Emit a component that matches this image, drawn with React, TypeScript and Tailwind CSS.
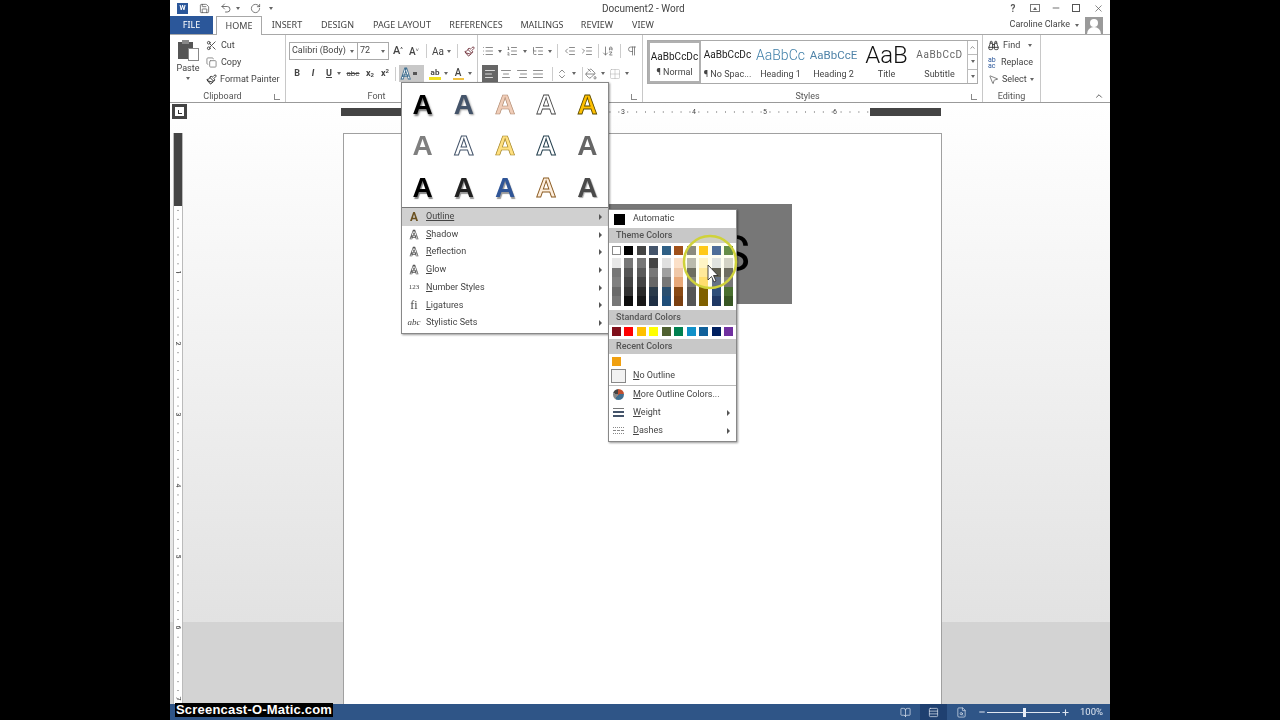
import { Scissors, Copy, Paintbrush, Undo2, RotateCw, Save, ChevronUp, X, Minus, Binoculars, MousePointer2, Plus, List, ListOrdered, ListTree, IndentDecrease, IndentIncrease, ArrowDownAZ, Pilcrow, AlignLeft, AlignCenter, AlignRight, AlignJustify, ChevronsUpDown, PaintBucket, Grid2x2, BookOpen, Rows3, FileSearch } from "lucide-react";

const font = "font-['Roboto',sans-serif]";
const tabFont = "font-['Noto_Sans',sans-serif]";

const tabs = [
  { label: "INSERT", w: "w-[50px]" },
  { label: "DESIGN", w: "w-[51px]" },
  { label: "PAGE LAYOUT", w: "w-[78px]" },
  { label: "REFERENCES", w: "w-[70px]" },
  { label: "MAILINGS", w: "w-[62px]" },
  { label: "REVIEW", w: "w-[48px]" },
  { label: "VIEW", w: "w-[44px]" },
];

const styleCards = [
  { sample: "AaBbCcDc", label: "¶ Normal", cls: "text-[10px] text-[#222]", active: true },
  { sample: "AaBbCcDc", label: "¶ No Spac...", cls: "text-[10px] text-[#222]" },
  { sample: "AaBbCc", label: "Heading 1", cls: "text-[14px] font-light text-[#3f7fa8]" },
  { sample: "AaBbCcE", label: "Heading 2", cls: "text-[11.5px] text-[#4f83a8]" },
  { sample: "AaB", label: "Title", cls: "h-[16px] text-[24px] font-light leading-[16px] text-[#111]" },
  { sample: "AaBbCcD", label: "Subtitle", cls: "text-[10px] tracking-[0.6px] text-[#666]" },
];

const galleryLetters = [
  "text-black [text-shadow:1px_2px_2px_#777]",
  "text-[#44546a] [text-shadow:1px_1px_2px_#999]",
  "text-[#f0cdb8] [-webkit-text-stroke:0.7px_#b08a70]",
  "text-white [-webkit-text-stroke:0.8px_#444]",
  "text-[#ffc000] [-webkit-text-stroke:0.8px_#5a4a00]",
  "text-[#7f7f7f]",
  "text-white [-webkit-text-stroke:1px_#44546a]",
  "text-[#ffe080] [-webkit-text-stroke:0.7px_#a08020]",
  "text-white [-webkit-text-stroke:1px_#25404f]",
  "text-[#666666]",
  "text-black [text-shadow:1px_2px_1px_#888]",
  "text-[#222222] [text-shadow:1px_2px_1px_#999]",
  "text-[#2f5597] [text-shadow:1px_2px_1px_#999]",
  "text-[#fdeedd] [-webkit-text-stroke:0.9px_#8a5a20]",
  "text-[#4a4a4a] [text-shadow:1px_1px_1px_#aaa]",
];

const outlinedA = "text-[12px] font-bold leading-none text-white [-webkit-text-stroke:0.7px_#555]";

const effectRows = [
  { key: "S", rest: "hadow", icon: "A", iconCls: outlinedA },
  { key: "R", rest: "eflection", icon: "A", iconCls: outlinedA },
  { key: "G", rest: "low", icon: "A", iconCls: outlinedA },
  { key: "N", rest: "umber Styles", icon: "123", iconCls: "text-[7px] font-['Liberation_Serif',serif] leading-none text-[#444]" },
  { key: "L", rest: "igatures", icon: "fi", iconCls: "text-[12px] font-['Liberation_Serif',serif] leading-none text-[#444]" },
  { key: "", rest: "Stylistic Sets", icon: "abc", iconCls: "text-[9px] italic font-['Liberation_Serif',serif] leading-none text-[#444]" },
];

const themeTop = ["bg-white border border-[#888]", "bg-black", "bg-[#444444]", "bg-[#44546a]", "bg-[#2e5f85]", "bg-[#a0501a]", "bg-[#777777]", "bg-[#ffc000]", "bg-[#2f5597]", "bg-[#4a7a38]"];

const themeShades = [
  ["bg-[#e8e8e8]", "bg-[#777777]", "bg-[#808080]", "bg-[#6a6a6a]", "bg-[#777777]"],
  ["bg-[#777777]", "bg-[#555555]", "bg-[#444444]", "bg-[#333333]", "bg-[#0d0d0d]"],
  ["bg-[#777777]", "bg-[#5a5a5a]", "bg-[#444444]", "bg-[#2a2a2a]", "bg-[#181818]"],
  ["bg-[#444444]", "bg-[#777777]", "bg-[#666666]", "bg-[#2a3a4a]", "bg-[#1f2f44]"],
  ["bg-[#e0e0e0]", "bg-[#a0a0a0]", "bg-[#777777]", "bg-[#2a4f6f]", "bg-[#1f4e79]"],
  ["bg-[#fbe0c8]", "bg-[#f0c8a8]", "bg-[#e8a878]", "bg-[#8a4a14]", "bg-[#7a3f10]"],
  ["bg-[#b0b0b0]", "bg-[#555555]", "bg-[#777777]", "bg-[#555555]", "bg-[#555555]"],
  ["bg-[#fff2cc]", "bg-[#ffe699]", "bg-[#ffd966]", "bg-[#7f6000]", "bg-[#7f6000]"],
  ["bg-[#dbe0ea]", "bg-[#444444]", "bg-[#4a5a80]", "bg-[#2f4f7a]", "bg-[#1f3864]"],
  ["bg-[#cccccc]", "bg-[#555555]", "bg-[#777777]", "bg-[#4a7030]", "bg-[#375623]"],
];

const standard = ["bg-[#7f0f1a]", "bg-[#ff0000]", "bg-[#ffc000]", "bg-[#ffff00]", "bg-[#4f6030]", "bg-[#008050]", "bg-[#1090c8]", "bg-[#10609a]", "bg-[#002060]", "bg-[#7030a0]"];

function Caret({ className = "" }: { className?: string }) {
  return <span className={`inline-block h-0 w-0 shrink-0 border-x-[2px] border-t-[3px] border-x-transparent border-t-[#666] ${className}`} />;
}

function SubArrow() {
  return <span className="h-0 w-0 border-y-[3px] border-l-[3px] border-y-transparent border-l-[#555]" />;
}

function Sep({ className = "" }: { className?: string }) {
  return <span className={`h-[14px] w-px shrink-0 bg-[#ccc] ${className}`} />;
}

function Launcher() {
  return <span className="h-[6px] w-[6px] border-b border-l border-[#888]" />;
}

function GroupLabel({ children, launcher = true }: { children?: React.ReactNode; launcher?: boolean }) {
  return (
    <div className={`absolute bottom-[-2px] left-0 right-0 flex h-[14px] items-center justify-center text-[9px] text-[#555] ${launcher ? "pr-[10px]" : ""}`}>
      {children}
      {launcher && (
        <span className="absolute right-[5px] top-[4px] flex">
          <Launcher />
        </span>
      )}
    </div>
  );
}

function MenuRow({ icon, label, arrow, active }: { icon: React.ReactNode; label: React.ReactNode; arrow?: boolean; active?: boolean }) {
  return (
    <div className={`flex h-[17.7px] items-center pr-[6px] text-[9px] text-[#444] ${active ? "bg-[#d0d0d0]" : ""}`}>
      <span className="flex w-[24px] justify-center">{icon}</span>
      <span className="flex-1">{label}</span>
      {arrow && <SubArrow />}
    </div>
  );
}

function ColorHeader({ children }: { children: React.ReactNode }) {
  return <div className="flex h-[15px] items-center bg-[#c8c8c8] pl-[7px] text-[9px] font-medium text-[#555]">{children}</div>;
}

function Swatch({ cls }: { cls: string }) {
  return <span className={`h-[9px] w-[9px] ${cls}`} />;
}

function Watermark() {
  return (
    <div className="absolute bottom-[3px] left-[175px] z-50 bg-black px-[1px] text-[13px] font-bold leading-[14px] tracking-[0.2px] text-white font-['Liberation_Sans',sans-serif]">
      Screencast-O-Matic.com
    </div>
  );
}

const rulerDots = "bg-[radial-gradient(circle,#aaa_0.5px,transparent_0.8px)]";

export default function App() {
  return (
    <div className={`relative flex h-[720px] w-[1280px] overflow-hidden bg-black ${font}`}>
      <div className="w-[170px] shrink-0" />
      <div className="relative flex w-[940px] shrink-0 flex-col overflow-hidden bg-white blur-[0.35px]">
        {/* title bar */}
        <div className="relative flex h-[16px] shrink-0 items-center pl-[7px] text-[#555]">
          <span className="flex h-[11px] w-[11px] items-center justify-center bg-[#2b579a] text-[7px] font-bold leading-none text-white">W</span>
          <Save size={11} className="ml-[10.5px] text-[#444]" strokeWidth={1.5} />
          <Undo2 size={12} className="ml-[10.5px] text-[#444]" strokeWidth={1.5} />
          <Caret className="ml-[4px]" />
          <RotateCw size={11} className="ml-[9.5px] text-[#444]" strokeWidth={1.5} />
          <Caret className="ml-[8.5px]" />
          <div className="ml-[329px] text-[10px] text-[#444]">Document2 - Word</div>
          <div className="ml-auto mr-[6px] flex items-center">
            <span className="w-[18px] text-center text-[10px] font-semibold">?</span>
            <span className="ml-[8px] flex h-[8px] w-[10px] items-center justify-center border border-[#777]">
              <span className="h-0 w-0 border-x-[2px] border-b-[3px] border-x-transparent border-b-[#666]" />
            </span>
            <Minus size={10} className="ml-[11px]" strokeWidth={2} />
            <span className="ml-[11px] h-[8px] w-[8px] border border-[#555]" />
            <X size={11} className="ml-[13px]" strokeWidth={1.5} />
          </div>
        </div>

        {/* tabs */}
        <div className={`flex h-[19px] shrink-0 items-stretch border-b border-[#a8a8a8] text-[9px] text-[#444] ${tabFont}`}>
          <div className="flex w-[43px] items-center justify-center bg-[#2b579a] text-white">FILE</div>
          <div className="relative z-10 ml-[3px] flex h-[19px] w-[46px] items-center justify-center border-x border-t border-[#a8a8a8] bg-white">HOME</div>
          {tabs.map((t) => (
            <div key={t.label} className={`flex items-center justify-center ${t.w}`}>
              {t.label}
            </div>
          ))}
          <div className="ml-auto flex items-center pr-[7px]">
            <span className={`text-[9px] ${font}`}>Caroline Clarke</span>
            <Caret className="ml-[5px]" />
            <span className="relative ml-[6px] h-[17px] w-[18px] overflow-hidden bg-[#9a9a9a]">
              <span className="absolute left-[5px] top-[2px] h-[8px] w-[8px] rounded-full bg-white" />
              <span className="absolute left-[2px] top-[10px] h-[10px] w-[14px] rounded-t-full bg-white" />
            </span>
          </div>
        </div>

        {/* ribbon */}
        <div className="flex h-[68px] shrink-0 border-b border-[#9a9a9a] text-[9px] text-[#444]">
          {/* clipboard */}
          <div className="relative flex w-[116px] shrink-0 border-r border-[#c8c8c8]">
            <div className="ml-[6px] mt-[5px] flex w-[24px] flex-col items-center">
              <span className="relative h-[21px] w-[21px]">
                <span className="absolute left-0 top-[2px] h-[17px] w-[15px] bg-[#555]" />
                <span className="absolute left-[4px] top-0 h-[4px] w-[7px] bg-[#888]" />
                <span className="absolute bottom-0 right-0 h-[13px] w-[11px] border border-[#888] bg-white" />
              </span>
              <span className="mt-[1px] leading-[12px]">Paste</span>
              <Caret className="mt-[3px]" />
            </div>
            <div className="ml-[6px] mt-[2px] flex flex-col">
              <div className="flex h-[17px] items-center gap-[4px]"><Scissors size={11} className="text-[#444]" />Cut</div>
              <div className="flex h-[17px] items-center gap-[4px]"><Copy size={11} className="text-[#888]" />Copy</div>
              <div className="flex h-[17px] items-center gap-[3px]"><Paintbrush size={11} className="text-[#222]" />Format Painter</div>
            </div>
            <GroupLabel>Clipboard</GroupLabel>
          </div>

          {/* font */}
          <div className="relative w-[192px] shrink-0 border-r border-[#c8c8c8]">
            <div className="ml-[3px] mt-[7px] flex h-[18px] items-center">
              <div className="flex h-[18px] w-[69px] items-center justify-between border border-[#aaa] pl-[2px] pr-[3px]">Calibri (Body)<Caret /></div>
              <div className="-ml-px flex h-[18px] w-[32px] items-center justify-between border border-[#aaa] pl-[2px] pr-[3px]">72<Caret /></div>
              <span className="ml-[4px] text-[11px] font-medium">A<sup className="text-[6px]">^</sup></span>
              <span className="ml-[6px] text-[10px] font-medium">A<sup className="text-[6px]">˅</sup></span>
              <Sep className="ml-[7px]" />
              <span className="ml-[5px] text-[10px]">Aa</span>
              <Caret className="ml-[3px]" />
              <Sep className="ml-[6px]" />
              <Paintbrush size={11} className="ml-[6px] text-[#70303a]" />
            </div>
            <div className="ml-[5px] mt-[5px] flex h-[17px] items-center">
              <span className="w-[12px] text-center text-[9px] font-bold">B</span>
              <span className="ml-[4px] w-[12px] text-center text-[9px] font-bold italic">I</span>
              <span className="ml-[4px] w-[12px] text-center text-[9px] font-bold underline">U</span>
              <Caret className="ml-[2px]" />
              <span className="ml-[4px] w-[16px] text-center text-[8px] line-through">abc</span>
              <span className="ml-[2px] w-[14px] text-center text-[9px] font-bold">x<sub className="text-[6px]">2</sub></span>
              <span className="ml-[1px] w-[14px] text-center text-[9px] font-bold">x<sup className="text-[6px]">2</sup></span>
              <Sep className="ml-[3px]" />
              <span className="ml-[3px] flex h-[17px] w-[25px] shrink-0 items-center gap-[3px] bg-[#c8c8c8] pl-[2px]">
                <span className="text-[14px] font-bold leading-none text-white [-webkit-text-stroke:0.8px_#3f6f90]">A</span>
                <span className="h-[3px] w-[4px] bg-[#555]" />
              </span>
              <span className="ml-[4px] flex w-[14px] shrink-0 flex-col items-center">
                <span className="text-[8px] font-bold leading-[9px]">ab</span>
                <span className="h-[3px] w-[12px] bg-[#f0e020]" />
              </span>
              <Caret className="ml-[2px]" />
              <span className="ml-[4px] flex w-[12px] shrink-0 flex-col items-center">
                <span className="text-[10px] font-medium leading-[10px]">A</span>
                <span className="h-[2px] w-[11px] bg-[#f0c040]" />
              </span>
              <Caret className="ml-[4px]" />
            </div>
            <GroupLabel>Font</GroupLabel>
          </div>

          {/* paragraph */}
          <div className="relative w-[165px] shrink-0 border-r border-[#c8c8c8] text-[#666]">
            <div className="ml-[4px] mt-[7px] flex h-[18px] items-center">
              <List size={12} strokeWidth={1.5} />
              <Caret className="ml-[4px]" />
              <ListOrdered size={12} strokeWidth={1.5} className="ml-[4px]" />
              <Caret className="ml-[5px]" />
              <ListTree size={12} strokeWidth={1.5} className="ml-[5px]" />
              <Caret className="ml-[4px]" />
              <Sep className="ml-[5px]" />
              <IndentDecrease size={12} strokeWidth={1.5} className="ml-[6px]" />
              <IndentIncrease size={12} strokeWidth={1.5} className="ml-[5px]" />
              <Sep className="ml-[5px]" />
              <ArrowDownAZ size={12} strokeWidth={1.5} className="ml-[3px]" />
              <Sep className="ml-[6px]" />
              <Pilcrow size={12} strokeWidth={1.5} className="ml-[5px]" />
            </div>
            <div className="ml-[4px] mt-[5px] flex h-[17px] items-center">
              <span className="flex h-[17px] w-[16px] shrink-0 items-center justify-center bg-[#666] text-white"><AlignLeft size={12} strokeWidth={1.5} /></span>
              <AlignCenter size={12} strokeWidth={1.5} className="ml-[2px]" />
              <AlignRight size={12} strokeWidth={1.5} className="ml-[4px]" />
              <AlignJustify size={12} strokeWidth={1.5} className="ml-[4px]" />
              <Sep className="ml-[8px]" />
              <ChevronsUpDown size={12} strokeWidth={1.5} className="ml-[3px]" />
              <Caret className="ml-[4px]" />
              <Sep className="ml-[6px]" />
              <PaintBucket size={12} strokeWidth={1.5} className="ml-[2px]" />
              <Caret className="ml-[4px]" />
              <Grid2x2 size={12} strokeWidth={1} className="ml-[4px] text-[#aaa]" />
              <Caret className="ml-[4px]" />
            </div>
            <GroupLabel />
          </div>

          {/* styles */}
          <div className="relative w-[340px] shrink-0 border-r border-[#c8c8c8]">
            <div className="ml-[4px] mt-[5px] flex h-[44px] w-[331px] border border-[#aaa]">
              {styleCards.map((s) => (
                <div key={s.label} className={`flex h-full w-[53px] flex-col items-center justify-between overflow-hidden pb-[3px] pt-[6px] ${s.active ? "border-2 border-[#b0b0b0]" : ""}`}>
                  <span className={`whitespace-nowrap leading-[16px] ${s.cls}`}>{s.sample}</span>
                  <span className="whitespace-nowrap text-[9px] leading-[12px]">{s.label}</span>
                </div>
              ))}
              <div className="ml-auto flex w-[10px] flex-col border-l border-[#bbb]">
                <span className="flex flex-1 items-center justify-center border-b border-[#bbb]"><ChevronUp size={7} /></span>
                <span className="flex flex-1 items-center justify-center border-b border-[#bbb]"><Caret /></span>
                <span className="flex flex-1 items-center justify-center"><Caret /></span>
              </div>
            </div>
            <GroupLabel>Styles</GroupLabel>
          </div>

          {/* editing */}
          <div className="relative w-[58px] shrink-0 border-r border-[#c8c8c8]">
            <div className="ml-[5px] mt-[2px] flex flex-col">
              <div className="flex h-[17px] items-center gap-[4px]"><Binoculars size={11} className="text-[#333]" />Find<Caret className="ml-[4px]" /></div>
              <div className="flex h-[17px] items-center gap-[2px]">
                <span className="flex w-[11px] flex-col text-[7px] leading-[6px] text-[#2b579a]"><span>ab</span><span>ac</span></span>
                Replace
              </div>
              <div className="flex h-[17px] items-center gap-[3px]"><MousePointer2 size={11} className="text-[#777]" />Select<Caret /></div>
            </div>
            <GroupLabel launcher={false}>Editing</GroupLabel>
          </div>
          <div className="flex flex-1 items-end justify-end pb-[1px] pr-[6px]">
            <ChevronUp size={10} className="text-[#444]" />
          </div>
        </div>

        {/* document area */}
        <div className="flex min-h-0 flex-1 flex-col bg-[linear-gradient(#ffffff_0%,#fafafa_15%,#e2e2e2_86.4%,#d3d3d3_86.4%,#d3d3d3_100%)]">
          {/* horizontal ruler */}
          <div className="flex h-[17px] shrink-0 items-center">
            <div className="ml-[2px] flex h-[15px] w-[15px] items-center justify-center bg-[#444]">
              <div className="flex h-[9px] w-[9px] items-center justify-center bg-white">
                <span className="h-[4px] w-[4px] border-b border-l border-[#333]" />
              </div>
            </div>
            <div className="ml-[154px] flex h-[8px] w-[600px] text-[7px] leading-[8px] text-[#444]">
              <div className="w-[60px] bg-[#444]" />
              <div className={`flex w-[469px] items-center bg-white bg-[length:8.9px_8px] pl-[220px] ${rulerDots}`}>
                <span className="w-[71px] shrink-0">3</span>
                <span className="w-[71px] shrink-0">4</span>
                <span className="w-[70px] shrink-0">5</span>
                <span>6</span>
              </div>
              <div className="flex-1 bg-[#444]" />
            </div>
          </div>

          <div className="flex min-h-0 flex-1 overflow-hidden">
            {/* vertical ruler */}
            <div className="ml-[3px] mt-[13px] flex w-[10px] shrink-0 flex-col border-x border-[#bbb] bg-white text-[7px] leading-none text-[#444]">
              <div className="h-[73px] shrink-0 bg-[#444]" />
              <div className={`flex flex-1 flex-col items-center bg-[length:8px_8.9px] pt-[31px] ${rulerDots}`}>
                {[1, 2, 3, 4, 5, 6, 7].map((n) => (
                  <span key={n} className="flex h-[71px] shrink-0 rotate-90 items-center">{n}</span>
                ))}
              </div>
            </div>

            {/* page */}
            <div className="ml-[160px] mt-[13px] w-[599px] shrink-0 border-x border-t border-[#a0a0a0] bg-white">
              <div className="ml-[248px] mt-[70px] flex h-[100px] w-[200px] items-center justify-end bg-[#777] pr-[42px] text-[50px] leading-none text-black">
                S
              </div>
            </div>
          </div>
        </div>

        {/* status bar */}
        <div className="flex h-[16px] shrink-0 items-center bg-[#2f5587] pr-[7px] text-[9.5px] text-[#dfe6f0]">
          <div className="ml-auto flex items-center">
            <span className="flex h-[16px] w-[29px] items-center justify-center"><BookOpen size={11} strokeWidth={1.5} /></span>
            <span className="flex h-[16px] w-[27px] items-center justify-center bg-[#1f4070]"><Rows3 size={11} strokeWidth={1.5} /></span>
            <span className="flex h-[16px] w-[30px] items-center justify-center"><FileSearch size={11} strokeWidth={1.5} /></span>
            <Minus size={8} className="ml-[1px]" strokeWidth={3} />
            <span className="relative ml-[1px] h-px w-[73px] bg-[#dfe6f0]">
              <span className="absolute left-[36px] top-[-4px] h-[9px] w-[3px] bg-[#e8eef6]" />
            </span>
            <Plus size={9} className="ml-[1.5px]" strokeWidth={3} />
            <span className="ml-[10px]">100%</span>
          </div>
        </div>

        {/* text effects menu */}
        <div className="absolute left-[231px] top-[82px] z-20 flex h-[252px] w-[208px] flex-col border border-[#888] bg-white text-[#444] shadow-[1px_1px_2px_rgba(0,0,0,0.4)]">
          <div className="grid h-[125px] shrink-0 grid-cols-5 grid-rows-[41.5px_41.5px_41.5px] border-b border-[#777] pt-[1px] font-['Liberation_Sans',sans-serif]">
            {galleryLetters.map((c, i) => (
              <span key={i} className={`flex items-center justify-center text-[28px] font-bold leading-none ${c}`}>A</span>
            ))}
          </div>
          <MenuRow active arrow icon={<span className="text-[12px] font-bold leading-none text-[#6a5020]">A</span>} label={<u>Outline</u>} />
          {effectRows.map((r) => (
            <MenuRow
              key={r.rest}
              arrow
              icon={<span className={r.iconCls}>{r.icon}</span>}
              label={
                <>
                  <u>{r.key}</u>
                  {r.rest}
                </>
              }
            />
          ))}
        </div>

        {/* outline colour menu */}
        <div className="absolute left-[438px] top-[209px] z-30 flex h-[233px] w-[129px] flex-col border border-[#888] bg-white text-[9px] text-[#444] shadow-[1px_1px_2px_rgba(0,0,0,0.4)]">
          <div className="flex h-[18px] shrink-0 items-center pl-[5px]">
            <span className="h-[11px] w-[11px] bg-black" />
            <span className="ml-[8px]">Automatic</span>
          </div>
          <ColorHeader>Theme Colors</ColorHeader>
          <div className="mt-[3px] flex justify-between px-[3px]">
            {themeTop.map((c, i) => (
              <Swatch key={i} cls={c} />
            ))}
          </div>
          <div className="mt-[3px] flex justify-between px-[3px]">
            {themeShades.map((col, i) => (
              <div key={i} className="flex w-[9px] flex-col">
                {col.map((c, j) => (
                  <span key={j} className={`h-[9.6px] ${c}`} />
                ))}
              </div>
            ))}
          </div>
          <div className="mt-[4px]"><ColorHeader>Standard Colors</ColorHeader></div>
          <div className="mt-[2px] flex justify-between px-[3px]">
            {standard.map((c, i) => (
              <Swatch key={i} cls={c} />
            ))}
          </div>
          <div className="mt-[3px]"><ColorHeader>Recent Colors</ColorHeader></div>
          <div className="mt-[3px] flex px-[3px]">
            <Swatch cls="bg-[#f0a010]" />
          </div>
          <div className="mt-[1px] flex h-[19px] shrink-0 items-center border-b border-[#bbb] pl-[2px]">
            <span className="h-[14px] w-[15px] border border-[#888] bg-[#f2f2f2]" />
            <span className="ml-[7px]"><u>N</u>o Outline</span>
          </div>
          <div className="flex h-[18px] shrink-0 items-center pl-[4px]">
            <span className="h-[11px] w-[11px] rounded-full bg-[conic-gradient(#c05030_0_25%,#3f6f90_25%_60%,#888_60%_80%,#444_80%)]" />
            <span className="ml-[9px]"><u>M</u>ore Outline Colors...</span>
          </div>
          <div className="flex h-[18px] shrink-0 items-center pl-[4px] pr-[6px]">
            <span className="flex w-[11px] flex-col gap-[2px]">
              <span className="h-px bg-[#777]" />
              <span className="h-[2px] bg-[#44546a]" />
              <span className="h-[2px] bg-[#44546a]" />
            </span>
            <span className="ml-[9px] flex-1"><u>W</u>eight</span>
            <SubArrow />
          </div>
          <div className="flex h-[18px] shrink-0 items-center pl-[4px] pr-[6px]">
            <span className="flex w-[11px] flex-col gap-[2px]">
              <span className="h-px border-t border-dotted border-[#888]" />
              <span className="h-px border-t border-dashed border-[#888]" />
              <span className="h-px border-t border-dotted border-[#888]" />
            </span>
            <span className="ml-[9px] flex-1"><u>D</u>ashes</span>
            <SubArrow />
          </div>
        </div>

        {/* cursor highlight */}
        <svg className="absolute left-[510px] top-[232px] z-40" width="60" height="60" viewBox="0 0 60 60">
          <circle cx="30" cy="30" r="26" fill="#ffffa0" fillOpacity="0.15" stroke="#cfd23a" strokeWidth="2.5" />
          <path d="M28 33 L28 48 L31.500 44.500 L34 50 L36 49 L33.500 43.500 L38 43.500 Z" fill="#fff" stroke="#222" strokeWidth="0.8" />
        </svg>
      </div>
      <div className="flex-1" />
      <Watermark />
    </div>
  );
}
